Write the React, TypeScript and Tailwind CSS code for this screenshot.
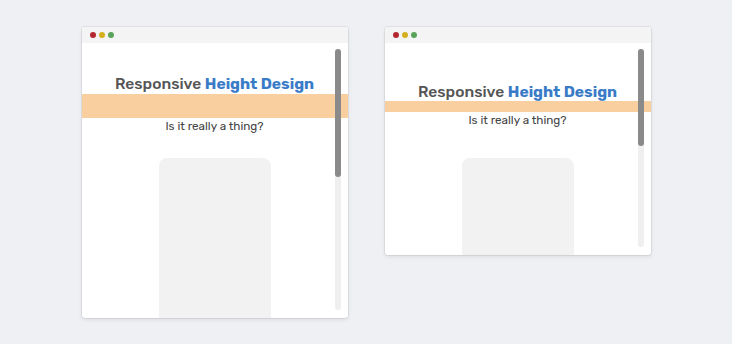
import React from 'react'

interface WindowProps {
  height: string
  headTop: string
  bandH: string
  cardGap: string
  thumbH: string
}

function BrowserWindow({ height, headTop, bandH, cardGap, thumbH }: WindowProps) {
  return (
    <div className={`relative w-[266px] ${height} bg-white rounded-[3px] overflow-hidden shadow-[0_0_0_1px_rgba(0,0,0,0.06),0_2px_4px_rgba(0,0,0,0.08)] flex flex-col`}>
      <div className="h-4 shrink-0 bg-[#f4f4f4] flex items-center gap-[3px] pl-[8px]">
        <span className="w-[6px] h-[6px] rounded-full bg-[#b3282e]" />
        <span className="w-[6px] h-[6px] rounded-full bg-[#d4b021]" />
        <span className="w-[6px] h-[6px] rounded-full bg-[#5aa35a]" />
      </div>
      <div className={`flex-1 flex flex-col items-center ${headTop}`}>
        <h1 className="h-5 leading-5 text-[15.6px] font-medium text-[#555] relative z-10">
          Responsive <span className="font-bold text-[#3a7bc8]">Height Design</span>
        </h1>
        <div className={`w-full ${bandH} bg-[#f9cf9f]`} />
        <p className="h-4 leading-4 text-[11.7px] text-[#444]">Is it really a thing?</p>
        <div className={`${cardGap} w-[112px] flex-1 bg-[#f2f2f2] rounded-t-[8px]`} />
      </div>
      <div className="absolute right-[7px] top-[22px] bottom-[8px] w-[6px] rounded-full bg-[#efefef]">
        <div className={`w-full ${thumbH} rounded-full bg-[#8a8a8a]`} />
      </div>
    </div>
  )
}

export default function App() {
  return (
    <div className="w-[732px] h-[344px] bg-[#eff0f4] flex justify-center items-start gap-[37px] pt-[27px] font-['Rubik','Open_Sans','Noto_Sans',sans-serif]">
      <BrowserWindow height="h-[291px]" headTop="pt-[31px]" bandH="h-6" cardGap="mt-6" thumbH="h-[128px]" />
      <BrowserWindow height="h-[228px]" headTop="pt-[39px]" bandH="h-[11px] -mt-px" cardGap="mt-[30px]" thumbH="h-[97px]" />
    </div>
  )
}
